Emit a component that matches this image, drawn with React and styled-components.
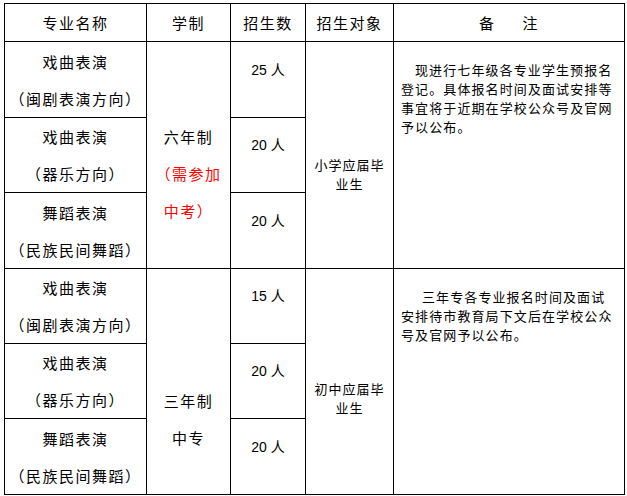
import React from 'react'
import styled, { createGlobalStyle } from 'styled-components'

const GlobalStyle = createGlobalStyle`
  html, body {
    margin: 0;
    padding: 0;
    background: #fff;
  }
  body {
    font-family: "Noto Sans CJK SC", sans-serif;
    color: #000;
  }
`

const groups = [
  {
    majors: [
      ['戏曲表演', '（闽剧表演方向）'],
      ['戏曲表演', '（器乐方向）'],
      ['舞蹈表演', '（民族民间舞蹈）'],
    ],
    term: ['六年制'],
    termNote: ['（需参加', '中考）'],
    termLead: 37,
    counts: ['25', '20', '20'],
    target: ['小学应届毕', '业生'],
    targetLead: 38,
    note: [
      '现进行七年级各专业学生预报名',
      '登记。具体报名时间及面试安排等',
      '事宜将于近期在学校公众号及官网',
      '予以公布。',
    ],
    indent: 14,
  },
  {
    majors: [
      ['戏曲表演', '（闽剧表演方向）'],
      ['戏曲表演', '（器乐方向）'],
      ['舞蹈表演', '（民族民间舞蹈）'],
    ],
    term: ['三年制', '中专'],
    termNote: [],
    termLead: 74,
    counts: ['15', '20', '20'],
    target: ['初中应届毕', '业生'],
    targetLead: 32,
    note: [
      '三年专各专业报名时间及面试',
      '安排待市教育局下文后在学校公众',
      '号及官网予以公布。',
    ],
    indent: 21,
  },
]

const App = () => {
  return (
    <>
      <GlobalStyle />
      <Sheet>
        <HeadCell>专业名称</HeadCell>
        <HeadCell>学制</HeadCell>
        <HeadCell>招生数</HeadCell>
        <HeadCell>招生对象</HeadCell>
        <HeadCell>
          <span>备</span>
          <Spacer />
          <span>注</span>
        </HeadCell>
        {groups.map((g, gi) =>
          g.majors.map((m, i) => (
            <React.Fragment key={`${gi}-${i}`}>
              <NameCell>
                <div>{m[0]}</div>
                <div>{m[1]}</div>
              </NameCell>
              {i === 0 && (
                <TermCell $span={3} $lead={g.termLead}>
                  {g.term.map(t => (
                    <div key={t}>{t}</div>
                  ))}
                  {g.termNote.map(t => (
                    <Red key={t}>{t}</Red>
                  ))}
                </TermCell>
              )}
              <CountCell>
                {g.counts[i]} 人
              </CountCell>
              {i === 0 && (
                <TargetCell $span={3} $lead={g.targetLead}>
                  {g.target.map(t => (
                    <div key={t}>{t}</div>
                  ))}
                </TargetCell>
              )}
              {i === 0 && (
                <NoteCell $span={3}>
                  {g.note.map((line, li) => (
                    <NoteLine key={li} $indent={li === 0 ? g.indent : 0}>
                      {line}
                    </NoteLine>
                  ))}
                </NoteCell>
              )}
            </React.Fragment>
          ))
        )}
      </Sheet>
    </>
  )
}

const Sheet = styled.div`
  display: grid;
  grid-template-columns: 141px 83px 74px 87px 230px;
  grid-template-rows: 37px 75px 74px 75px 74px 74px 75px;
  gap: 1px;
  padding: 1px;
  background: #000;
  width: max-content;
  margin: 3px 0 0 4px;
`

const Cell = styled.div`
  background: #fff;
  display: flex;
  flex-direction: column;
  align-items: center;
  justify-content: center;
  text-align: center;
  white-space: nowrap;
  grid-row: ${p => (p.$span ? `span ${p.$span}` : 'auto')};
`

const HeadCell = styled(Cell)`
  flex-direction: row;
  font-size: 15px;
  letter-spacing: 1.5px;
  line-height: 20px;
`

const Spacer = styled.span`
  display: inline-block;
  width: 27px;
`

const NameCell = styled(Cell)`
  font-size: 15px;
  letter-spacing: 1.5px;
  line-height: 37px;
`

const TermCell = styled(Cell)`
  font-size: 15px;
  letter-spacing: 1.5px;
  line-height: 37px;
  padding-top: ${p => p.$lead}px;
  box-sizing: border-box;
`

const Red = styled.div`
  color: #ff0000;
`

const CountCell = styled(Cell)`
  font-family: "Liberation Sans", "Noto Sans CJK SC", sans-serif;
  font-size: 14px;
  line-height: 19px;
  padding-bottom: 19px;
  box-sizing: border-box;
`

const TargetCell = styled(Cell)`
  font-size: 13px;
  letter-spacing: 1px;
  line-height: 19px;
  padding-top: ${p => p.$lead}px;
  box-sizing: border-box;
`

const NoteCell = styled(Cell)`
  align-items: stretch;
  justify-content: flex-start;
  text-align: left;
  padding: 18px 4px 0 7px;
  font-size: 13px;
  letter-spacing: 1.1px;
  line-height: 19px;
`

const NoteLine = styled.div`
  padding-left: ${p => p.$indent}px;
`

export default App
